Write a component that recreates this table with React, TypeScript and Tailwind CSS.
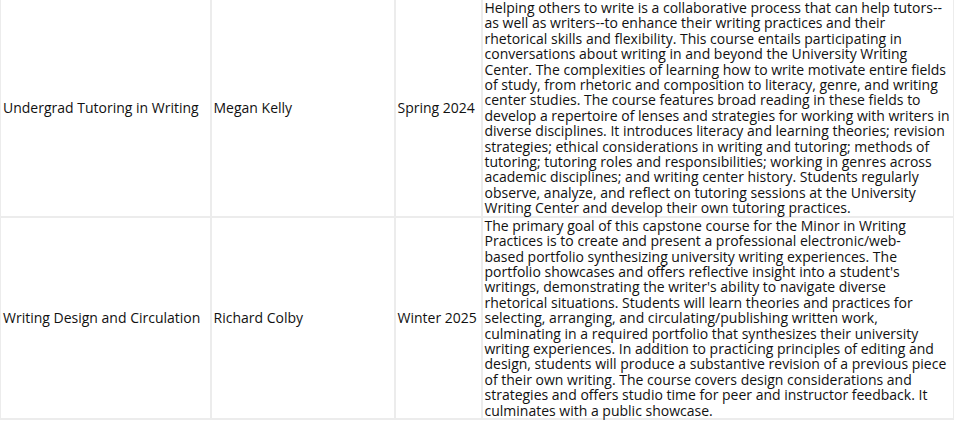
import React from "react";

const rows = [
  {
    title: "Undergrad Tutoring in Writing",
    instructor: "Megan Kelly",
    term: "Spring 2024",
    lines: [
      "Helping others to write is a collaborative process that can help tutors--",
      "as well as writers--to enhance their writing practices and their",
      "rhetorical skills and flexibility. This course entails participating in",
      "conversations about writing in and beyond the University Writing",
      "Center. The complexities of learning how to write motivate entire fields",
      "of study, from rhetoric and composition to literacy, genre, and writing",
      "center studies. The course features broad reading in these fields to",
      "develop a repertoire of lenses and strategies for working with writers in",
      "diverse disciplines. It introduces literacy and learning theories; revision",
      "strategies; ethical considerations in writing and tutoring; methods of",
      "tutoring; tutoring roles and responsibilities; working in genres across",
      "academic disciplines; and writing center history. Students regularly",
      "observe, analyze, and reflect on tutoring sessions at the University",
      "Writing Center and develop their own tutoring practices.",
    ],
  },
  {
    title: "Writing Design and Circulation",
    instructor: "Richard Colby",
    term: "Winter 2025",
    lines: [
      "The primary goal of this capstone course for the Minor in Writing",
      "Practices is to create and present a professional electronic/web-",
      "based portfolio synthesizing university writing experiences. The",
      "portfolio showcases and offers reflective insight into a student's",
      "writings, demonstrating the writer's ability to navigate diverse",
      "rhetorical situations. Students will learn theories and practices for",
      "selecting, arranging, and circulating/publishing written work,",
      "culminating in a required portfolio that synthesizes their university",
      "writing experiences. In addition to practicing principles of editing and",
      "design, students will produce a substantive revision of a previous piece",
      "of their own writing. The course covers design considerations and",
      "strategies and offers studio time for peer and instructor feedback. It",
      "culminates with a public showcase.",
    ],
  },
];

export default function App() {
  return (
    <div
      className="w-[954px] h-[423px] bg-white overflow-hidden text-[#111] text-[14px] leading-[15.4px]"
      style={{ fontFamily: '"Open Sans", "Liberation Sans", Arial, sans-serif' }}
    >
      <table className="table-fixed border-collapse w-[953px]">
        <colgroup>
          <col className="w-[210px]" />
          <col className="w-[184px]" />
          <col className="w-[87px]" />
          <col className="w-[472px]" />
        </colgroup>
        <tbody>
          {rows.map((r, i) => (
            <tr key={i}>
              <td className="border-2 border-t-0 border-[#ececec] px-[2px] align-middle whitespace-nowrap first:border-l-[1px]">
                {r.title}
              </td>
              <td className="border-2 border-t-0 border-[#ececec] px-[2px] align-middle whitespace-nowrap">
                {r.instructor}
              </td>
              <td className="border-2 border-t-0 border-[#ececec] px-[2px] align-middle whitespace-nowrap">
                {r.term}
              </td>
              <td className="border-2 border-t-0 border-[#ececec] px-[2px] py-0 align-middle">
                {r.lines.map((l, j) => (
                  <span key={j} className="block whitespace-nowrap">
                    {l}
                  </span>
                ))}
              </td>
            </tr>
          ))}
        </tbody>
      </table>
    </div>
  );
}
